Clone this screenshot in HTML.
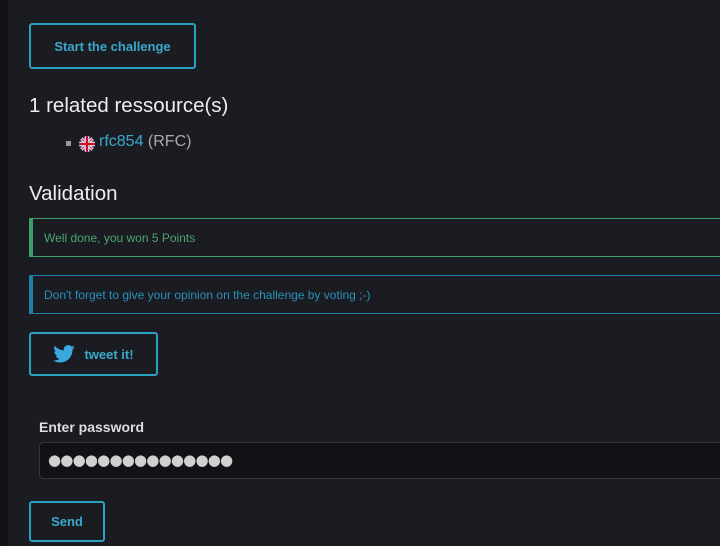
<!DOCTYPE html>
<html><head><style>
html,body{margin:0;padding:0}
body{width:720px;height:546px;overflow:hidden;background:#1a1c22;font-family:"Liberation Sans",sans-serif;position:relative;color:#ddd}
.strip{position:absolute;left:0;top:0;width:8px;height:546px;background:#121317}
.btn{position:absolute;box-sizing:border-box;border:2px solid #2a9fbf;border-radius:3px;color:#3aa9cc;font-weight:bold;font-size:13px;display:flex;align-items:center;justify-content:center}
.alert{position:absolute;left:29px;width:700px;box-sizing:border-box;font-size:12px;display:flex;align-items:center;padding-left:11px}
</style></head><body>
<div class="strip"></div>
<div class="btn" style="left:29px;top:23px;width:167px;height:46px">Start the challenge</div>
<div style="position:absolute;left:29px;top:94px;font-size:20.5px;color:#eee">1 related ressource(s)</div>
<div style="position:absolute;left:66px;top:141px;width:5px;height:5px;background:#999"></div>
<svg style="position:absolute;left:79px;top:136px" width="16" height="16" viewBox="0 0 16 16"><defs><clipPath id="c"><circle cx="8" cy="8" r="8"/></clipPath></defs><g clip-path="url(#c)"><rect width="16" height="16" fill="#1f3a8a"/><path d="M0 0L16 16M16 0L0 16" stroke="#fff" stroke-width="3"/><path d="M0 0L16 16M16 0L0 16" stroke="#c8102e" stroke-width="1"/><path d="M8 0V16M0 8H16" stroke="#fff" stroke-width="4.5"/><path d="M8 0V16M0 8H16" stroke="#c8102e" stroke-width="2.5"/></g></svg>
<div style="position:absolute;left:99px;top:133px;font-size:16px"><span style="color:#3aa9cc">rfc854</span> <span style="color:#aaa">(RFC)</span></div>
<div style="position:absolute;left:29px;top:182px;font-size:20.5px;color:#eee">Validation</div>
<div class="alert" style="top:218px;height:39px;border:1px solid #3d9f6a;border-left:4px solid #3d9f6a;color:#4aa56f">Well done, you won 5 Points</div>
<div class="alert" style="top:275px;height:39px;border:1px solid #1f7fa8;border-left:4px solid #1f7fa8;color:#2a90b8">Don't forget to give your opinion on the challenge by voting ;-)</div>
<div class="btn" style="left:29px;top:332px;width:129px;height:44px"><svg width="22" height="18" viewBox="0 0 24 20" style="margin-right:9px"><path fill="#3aa9e0" d="M24 2.4a9.8 9.8 0 0 1-2.8.8 4.9 4.9 0 0 0 2.2-2.7 9.9 9.9 0 0 1-3.1 1.2A4.9 4.9 0 0 0 11.9 6.1 14 14 0 0 1 1.7.9a4.9 4.9 0 0 0 1.5 6.6A4.9 4.9 0 0 1 1 6.9a4.9 4.9 0 0 0 3.9 4.8 4.9 4.9 0 0 1-2.2.1 4.9 4.9 0 0 0 4.6 3.4A9.9 9.9 0 0 1 0 17.2 14 14 0 0 0 7.5 19.4c9.1 0 14-7.5 14-14v-.6A10 10 0 0 0 24 2.4z"/></svg>tweet it!</div>
<div style="position:absolute;left:39px;top:419px;font-size:14px;font-weight:bold;color:#ddd">Enter password</div>
<div style="position:absolute;left:39px;top:442px;width:700px;height:37px;box-sizing:border-box;background:#111216;border:1px solid #33353a;border-radius:4px;color:#d0d0d0;font-family:'DejaVu Sans',sans-serif;font-size:15px;line-height:35px;padding-left:8px;letter-spacing:-0.8px">●●●●●●●●●●●●●●●</div>
<div class="btn" style="left:29px;top:501px;width:76px;height:41px">Send</div>
</body></html>
